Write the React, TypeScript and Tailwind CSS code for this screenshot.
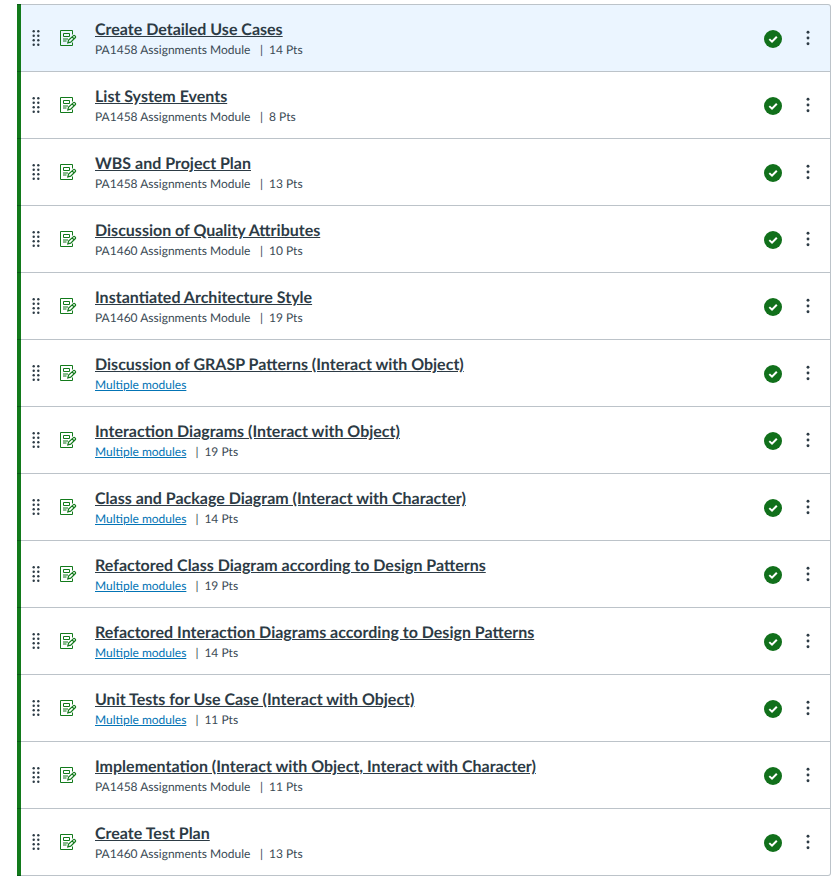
type Item = { title: string; module?: string; pts?: number };

const items: Item[] = [
  { title: 'Create Detailed Use Cases', module: 'PA1458 Assignments Module', pts: 14 },
  { title: 'List System Events', module: 'PA1458 Assignments Module', pts: 8 },
  { title: 'WBS and Project Plan', module: 'PA1458 Assignments Module', pts: 13 },
  { title: 'Discussion of Quality Attributes', module: 'PA1460 Assignments Module', pts: 10 },
  { title: 'Instantiated Architecture Style', module: 'PA1460 Assignments Module', pts: 19 },
  { title: 'Discussion of GRASP Patterns (Interact with Object)' },
  { title: 'Interaction Diagrams (Interact with Object)', pts: 19 },
  { title: 'Class and Package Diagram (Interact with Character)', pts: 14 },
  { title: 'Refactored Class Diagram according to Design Patterns', pts: 19 },
  { title: 'Refactored Interaction Diagrams according to Design Patterns', pts: 14 },
  { title: 'Unit Tests for Use Case (Interact with Object)', pts: 11 },
  { title: 'Implementation (Interact with Object, Interact with Character)', module: 'PA1458 Assignments Module', pts: 11 },
  { title: 'Create Test Plan', module: 'PA1460 Assignments Module', pts: 13 },
];

function DragHandle() {
  return (
    <svg width="8" height="16" viewBox="0 0 8 16" className="shrink-0" fill="#2d3b45">
      {[1.3, 5.75, 10.25, 14.7].map((y) => (
        <g key={y}>
          <circle cx="1.7" cy={y} r="1.2" />
          <circle cx="6.3" cy={y} r="1.2" />
        </g>
      ))}
    </svg>
  );
}

function AssignmentIcon() {
  return (
    <svg width="17" height="16" viewBox="0 0 17 16" className="shrink-0" fill="none" stroke="#127a1b">
      <path d="M12.5 4.5V.5H.5v15h12V12.5" />
      <path d="M3.5 3.5h6v3h-6zM3 9h5M3 11h3.5" />
      <path strokeWidth="1.2" d="M7.8 12.9l.8-2.9 4.9-4.4q.6-.5 1.2 0l.7.7q.5.6 0 1.2l-4.7 4.7zM12.1 6.9l2.1 2.1" />
    </svg>
  );
}

function Published() {
  return (
    <svg width="18" height="18" viewBox="0 0 18 18" className="shrink-0">
      <circle cx="9" cy="9" r="9" fill="#11701b" />
      <path d="M5.3 9.1l2.7 2.6 4.8-5" fill="none" stroke="#fff" strokeWidth="2" />
    </svg>
  );
}

function Kebab() {
  return (
    <svg width="4" height="16" viewBox="0 0 4 16" className="shrink-0" fill="#2d3b45">
      <circle cx="2" cy="2.3" r="1.45" />
      <circle cx="2" cy="8" r="1.45" />
      <circle cx="2" cy="13.7" r="1.45" />
    </svg>
  );
}

export default function App() {
  return (
    <div className="h-[888px] bg-white pt-1 pr-2 pl-[17px] font-['Lato',sans-serif] text-[#2d3b45] [text-rendering:geometricPrecision]">
      <ul className="flex flex-col">
        {items.map((item, i) => (
          <li key={item.title} className="-mb-px flex h-[68px]">
            <div className="w-1 shrink-0 border-y border-[#0b5a18] bg-[#127a1b]" />
            <div
              className={`flex flex-1 items-start border-y border-r border-[#bcc3c9] pl-[11px] ${i === 0 ? 'rounded-tr-[3px] bg-[#ebf5ff]' : ''} ${i === items.length - 1 ? 'rounded-br-[3px]' : ''}`}
            >
              <div className="flex pt-[25px]">
                <DragHandle />
                <div className="ml-5">
                  <AssignmentIcon />
                </div>
              </div>
              <div className="ml-[18px] flex-1 pt-[13px]">
                <a className="block text-base leading-6 font-bold underline">{item.title}</a>
                <div className="flex text-xs leading-4 text-[#3b4a55]">
                  {item.module ? <span>{item.module}</span> : <a className="text-[#0374b5] underline">Multiple modules</a>}
                  {item.pts && (
                    <>
                      <span className={item.module ? 'ml-[9.6px]' : 'ml-[9px]'}>|</span>
                      <span className="ml-1.5">{item.pts} Pts</span>
                    </>
                  )}
                </div>
              </div>
              <div className="flex items-start pt-[25px] pr-5">
                <Published />
                <div className="ml-6">
                  <Kebab />
                </div>
              </div>
            </div>
          </li>
        ))}
      </ul>
    </div>
  );
}
